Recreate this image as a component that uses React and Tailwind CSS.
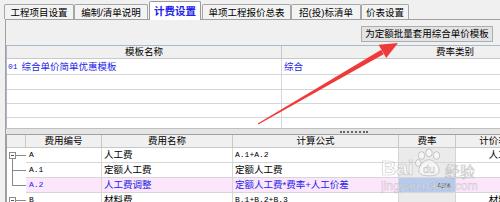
import React from "react";

const BLUE = "text-[#2323e8]";

function Tab({ w, label, selected }) {
  if (selected) {
    return (
      <div
        className={`relative z-10 -mb-px flex h-[19px] flex-none items-center justify-center rounded-t-[2px] border border-b-0 border-[#9a9a9a] bg-white text-[10.5px] font-bold ${BLUE}`}
        style={{ width: w }}
      >
        {label}
      </div>
    );
  }
  return (
    <div
      className="flex h-[15px] flex-none items-center justify-center rounded-t-[2px] border border-b-0 border-[#a6a6a6] bg-[#f3f3f3] pt-[1px] text-black"
      style={{ width: w }}
    >
      {label}
    </div>
  );
}

function TreeCell({ kind }) {
  return (
    <div className="relative h-full w-[19px] flex-none bg-white">
      {kind === "box" && (
        <>
          <div className="absolute left-[2px] top-[4px] flex h-[7px] w-[7px] items-center justify-center border border-[#8a8a8a] bg-white">
            <div className="h-px w-[3px] bg-[#555]" />
          </div>
          <div className="absolute left-[9px] top-[7px] h-px w-[10px] bg-[#8a8a8a]" />
          <div className="absolute left-[5px] top-[11px] bottom-0 w-px bg-[#8a8a8a]" />
        </>
      )}
      {kind === "mid" && (
        <>
          <div className="absolute left-[5px] top-0 bottom-0 w-px bg-[#8a8a8a]" />
          <div className="absolute left-[5px] top-[7px] h-px w-[14px] bg-[#8a8a8a]" />
        </>
      )}
      {kind === "end" && (
        <>
          <div className="absolute left-[5px] top-0 h-[8px] w-px bg-[#8a8a8a]" />
          <div className="absolute left-[5px] top-[7px] h-px w-[14px] bg-[#8a8a8a]" />
        </>
      )}
      {kind === "boxLast" && (
        <>
          <div className="absolute left-[2px] top-[4px] flex h-[7px] w-[7px] items-center justify-center border border-[#8a8a8a] bg-white">
            <div className="h-px w-[3px] bg-[#555]" />
          </div>
          <div className="absolute left-[9px] top-[7px] h-px w-[10px] bg-[#8a8a8a]" />
        </>
      )}
    </div>
  );
}

function DataRow({ tree, code, name, formula, formulaMono, rate, table, highlight }) {
  const rowBg = highlight ? "bg-[#fbe6fb]" : "bg-white";
  const txt = highlight ? BLUE : "text-black";
  return (
    <div className="flex h-[15px] flex-none">
      <TreeCell kind={tree} />
      <div className={`flex flex-1 border-b border-[#d6d6d6] ${rowBg} ${txt}`}>
        <div className="flex w-[76px] flex-none items-center border-r border-[#d6d6d6] pl-[3px] font-['Liberation_Mono',monospace] text-[8px]">
          {code}
        </div>
        <div className="flex w-[131px] flex-none items-center border-r border-[#d6d6d6] pl-[2px]">
          {name}
        </div>
        <div
          className={`flex w-[166px] flex-none items-center border-r border-[#d6d6d6] pl-[2px] whitespace-nowrap ${
            formulaMono ? "font-['Liberation_Mono',monospace] text-[8px]" : ""
          }`}
        >
          {formula}
        </div>
        <div
          className={`flex w-[57px] flex-none items-center justify-end border-r border-[#d6d6d6] pr-[4px] text-[7px] ${
            highlight ? "bg-[#b7cbef] text-[#333]" : "bg-[#ebebeb]"
          }`}
        >
          {rate}
        </div>
        <div className="flex w-[86px] flex-none items-center justify-center pl-[8px] text-black">
          {table}
        </div>
      </div>
    </div>
  );
}

function Paw() {
  return (
    <svg width="30" height="30" viewBox="0 0 28 28" className="flex-none">
      <g fill="rgba(255,255,255,0.55)" stroke="rgba(140,140,140,0.5)" strokeWidth="0.8">
        <ellipse cx="7" cy="7" rx="3" ry="3.6" />
        <ellipse cx="14" cy="4.5" rx="3" ry="3.6" />
        <ellipse cx="21" cy="7" rx="3" ry="3.6" />
        <ellipse cx="4" cy="14" rx="2.6" ry="3.2" />
        <path d="M14 11 C 20 11, 25 19, 23 23 C 21 27, 7 27, 5 23 C 3 19, 8 11, 14 11 Z" />
      </g>
      <text
        x="14"
        y="23"
        textAnchor="middle"
        fontSize="10"
        fontFamily="Liberation Sans, sans-serif"
        fill="rgba(255,255,255,0.7)"
        stroke="rgba(140,140,140,0.5)"
        strokeWidth="0.5"
      >
        du
      </text>
    </svg>
  );
}

export default function App() {
  return (
    <div className="relative h-[202px] w-[500px] overflow-hidden bg-[#f0f0f0] font-['Liberation_Sans','Noto_Sans_CJK_SC',sans-serif] text-[9.5px] leading-none text-black">
      {/* tab strip */}
      <div className="flex h-[19px] items-end pl-[4px]">
        <Tab w={70} label="工程项目设置" />
        <Tab w={74} label="编制/清单说明" />
        <div className="w-px flex-none" />
        <Tab w={52} label="计费设置" selected />
        <div className="w-px flex-none" />
        <Tab w={89} label="单项工程报价总表" />
        <Tab w={70} label="招(投)标清单" />
        <Tab w={48} label="价表设置" />
      </div>

      {/* panel */}
      <div className="ml-[5px] flex h-[183px] w-[520px] flex-col border-l border-t border-[#a0a0a0] bg-[#f0f0f0]">
        {/* toolbar */}
        <div className="flex h-[25px] flex-none items-start pl-[355px] pt-[6px]">
          <div className="flex h-[16px] w-[132px] items-center justify-center border border-[#adadad] bg-[#e3e3e3] text-black">
            为定额批量套用综合单价模板
          </div>
        </div>

        {/* top grid */}
        <div className="flex h-[83px] flex-none flex-col border-l border-t border-[#a9b9ca] bg-white">
          <div className="flex h-[13px] flex-none border-b border-[#c8c8c8] bg-[#f0f0f0]">
            <div className="flex w-[275px] flex-none items-center justify-center border-r border-[#c8c8c8]">
              模板名称
            </div>
            <div className="flex w-[346px] flex-none items-center justify-center">费率类别</div>
          </div>
          <div className={`flex h-[16px] flex-none border-b border-[#d6d6d6] ${BLUE}`}>
            <div className="flex w-[275px] flex-none items-center border-r border-[#d6d6d6] pl-[1px]">
              <span className="mr-[4px] font-['Liberation_Mono',monospace] text-[8px]">01</span>
              综合单价简单优惠模板
            </div>
            <div className="flex flex-1 items-center pl-[2px]">综合</div>
          </div>
          {[15, 14, 14].map((h, i) => (
            <div key={i} className="flex flex-none border-b border-[#d6d6d6]" style={{ height: h }}>
              <div className="w-[275px] flex-none border-r border-[#d6d6d6]" />
              <div className="flex-1" />
            </div>
          ))}
          <div className="flex flex-1">
            <div className="w-[275px] flex-none border-r border-[#d6d6d6]" />
            <div className="flex-1" />
          </div>
        </div>

        {/* splitter */}
        <div className="flex h-[6px] flex-none items-center border-t border-[#c0c0c0] bg-[#e4e4e4]">
          <div className="ml-[334px] h-0 w-[28px] border-t-2 border-dotted border-[#666]" />
        </div>

        {/* bottom grid */}
        <div className="flex flex-1 flex-col border-l border-t border-[#a0a0a0] bg-white">
          <div className="flex h-[13px] flex-none border-b border-[#c8c8c8] bg-[#f0f0f0]">
            <div className="w-[19px] flex-none border-r border-[#c8c8c8]" />
            <div className="flex w-[76px] flex-none items-center justify-center border-r border-[#c8c8c8]">
              费用编号
            </div>
            <div className="flex w-[131px] flex-none items-center justify-center border-r border-[#c8c8c8]">
              费用名称
            </div>
            <div className="flex w-[166px] flex-none items-center justify-center border-r border-[#c8c8c8]">
              计算公式
            </div>
            <div className="flex w-[57px] flex-none items-center justify-center border-r border-[#c8c8c8]">
              费率
            </div>
            <div className="flex w-[86px] flex-none items-center justify-center pl-[8px]">计价表类别</div>
          </div>
          <DataRow tree="box" code="A" name="人工费" formula="A.1+A.2" formulaMono rate="" table="人工费" />
          <DataRow tree="mid" code="A.1" name="定额人工费" formula="定额人工费" rate="" table="" />
          <DataRow
            tree="end"
            code="A.2"
            name="人工费调整"
            formula="定额人工费*费率+人工价差"
            rate="43%"
            table=""
            highlight
          />
          <DataRow tree="boxLast" code="B" name="材料费" formula="B.1+B.2+B.3" formulaMono rate="" table="材料费" />
        </div>
      </div>

      {/* watermark */}
      <div className="pointer-events-none absolute left-[381px] top-[148px] flex flex-col">
        <div className="flex items-end">
          <span className="font-['Liberation_Sans',sans-serif] text-[21px] font-bold leading-none text-[rgba(255,255,255,0.55)] [-webkit-text-stroke:0.6px_rgba(140,140,140,0.5)]">
            Bai
          </span>
          <Paw />
          <span className="ml-[1px] font-['Noto_Sans_CJK_SC',sans-serif] text-[15px] leading-none text-[rgba(255,255,255,0.55)] [-webkit-text-stroke:0.6px_rgba(140,140,140,0.5)]">
            经验
          </span>
        </div>
        <span className="mt-[2px] font-['Liberation_Sans',sans-serif] text-[12px] leading-none text-[rgba(255,255,255,0.6)] [-webkit-text-stroke:0.5px_rgba(140,140,140,0.45)]">
          jingyan.baidu.com
        </span>
      </div>

      {/* red arrow */}
      <svg className="pointer-events-none absolute left-0 top-0" width="500" height="202" viewBox="0 0 500 202">
        <polygon fill="#f03a3a" points="257.7,123.6 258.3,124.4 383.6,54.2 381.2,49.8" />
        <polygon fill="#f03a3a" points="398,43 386.2,58 378.6,44.8" />
      </svg>
    </div>
  );
}
